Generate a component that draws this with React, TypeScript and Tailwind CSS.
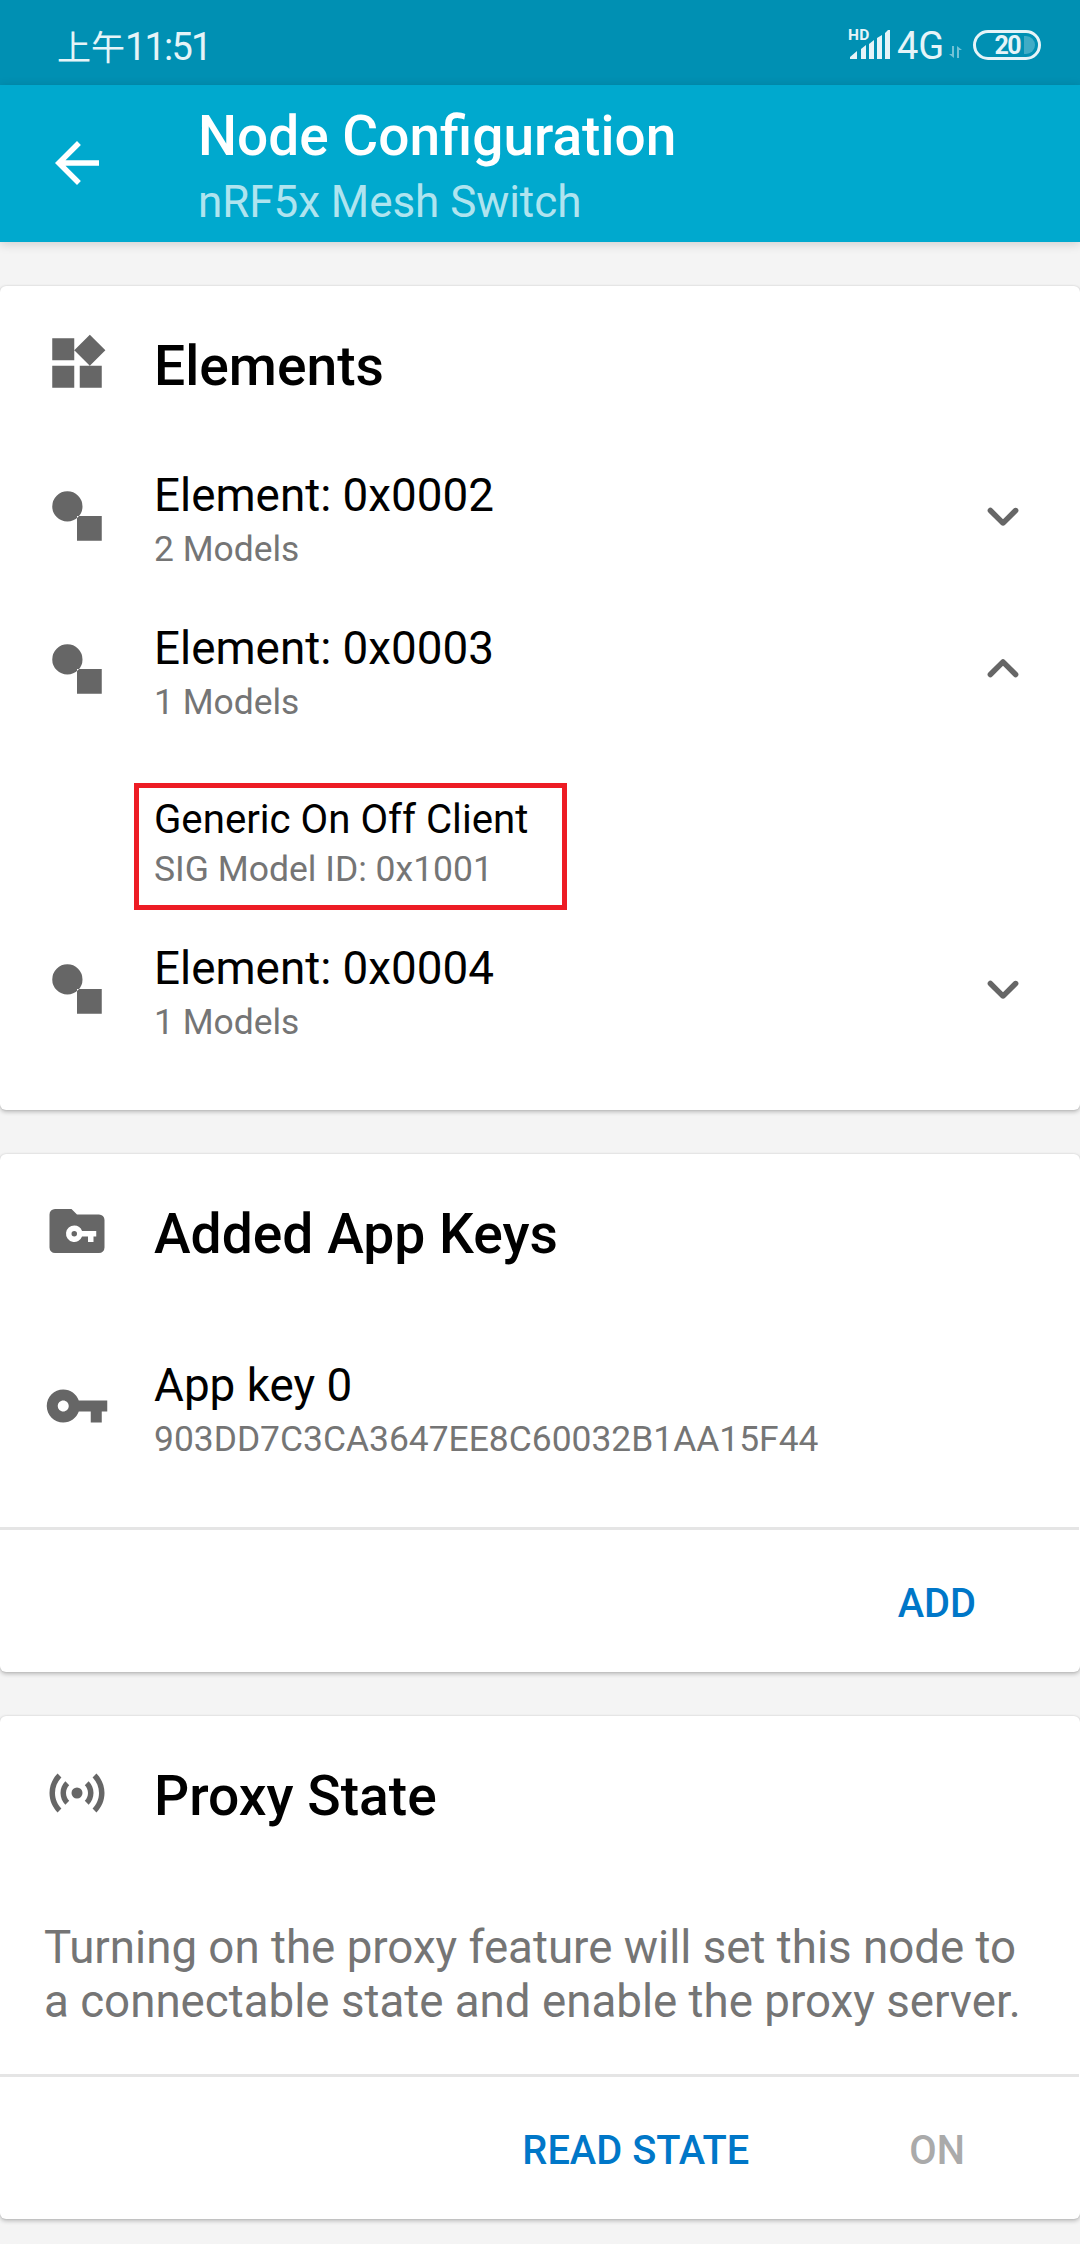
import type { ReactNode } from 'react';

const ICONS = {
  back: 'M20 11H7.83l5.59-5.59L12 4l-8 8 8 8 1.41-1.41L7.83 13H20v-2z',
  widgets:
    'M13 13v8h8v-8h-8zM3 21h8v-8H3v8zM3 3v8h8V3H3zm13.66-1.31L11 7.34 16.66 13l5.66-5.66-5.66-5.65z',
  element: 'M8.5 3a5.5 5.5 0 1 0 0 11a5.5 5.5 0 0 0 0-11zM12 12h9v9h-9z',
  down: 'M15.88 9.29L12 13.17 8.12 9.29a.996.996 0 1 0-1.41 1.41l4.59 4.59c.39.39 1.02.39 1.41 0l4.59-4.59a.996.996 0 0 0 0-1.41c-.39-.38-1.03-.39-1.42 0z',
  up: 'M11.29 8.71L6.7 13.3a.996.996 0 1 0 1.41 1.41L12 10.83l3.88 3.88a.996.996 0 1 0 1.41-1.41L12.7 8.71a.996.996 0 0 0-1.41 0z',
  folderKey:
    'M10 4l2 2h8a2 2 0 0 1 2 2v10a2 2 0 0 1-2 2H4a2 2 0 0 1-2-2V6a2 2 0 0 1 2-2h6zM11 10a3 3 0 1 0 2.83 4H16v2h2v-2h1v-2h-5.17A3 3 0 0 0 11 10zm0 2a1 1 0 1 1 0 2a1 1 0 0 1 0-2z',
  key: 'M12.65 10C11.83 7.67 9.61 6 7 6c-3.31 0-6 2.69-6 6s2.69 6 6 6c2.61 0 4.83-1.67 5.65-4H17v4h4v-4h2v-4H12.65zM7 14c-1.1 0-2-.9-2-2s.9-2 2-2 2 .9 2 2-.9 2-2 2z',
  proxy:
    'M4.93 4.93C3.12 6.74 2 9.24 2 12c0 2.76 1.12 5.26 2.93 7.07l1.41-1.41C4.89 16.22 4 14.22 4 12c0-2.21.89-4.22 2.34-5.66L4.93 4.93zM19.07 4.93l-1.41 1.41C19.11 7.78 20 9.79 20 12c0 2.22-.89 4.22-2.34 5.66l1.41 1.41C20.88 17.26 22 14.76 22 12c0-2.76-1.12-5.26-2.93-7.07zM7.76 7.76C6.67 8.85 6 10.35 6 12s.67 3.15 1.76 4.24l1.41-1.41C8.45 14.11 8 13.11 8 12s.45-2.11 1.17-2.83L7.76 7.76zM16.24 7.76l-1.41 1.41C15.55 9.89 16 10.89 16 12s-.45 2.11-1.17 2.83l1.41 1.41C17.33 15.15 18 13.65 18 12s-.67-3.15-1.76-4.24zM12 10a2 2 0 1 0 0 4a2 2 0 0 0 0-4z',
};

function Icon({ name }: { name: keyof typeof ICONS }) {
  return (
    <svg viewBox="0 0 24 24" className="size-[66px] shrink-0" fill="currentColor" fillRule="evenodd">
      <path d={ICONS[name]} />
    </svg>
  );
}

function StatusBar() {
  return (
    <div className="flex h-[85px] items-start justify-between bg-[#0090b3] pr-[39px] pl-[57px] text-[#e6f4f8]">
      <div className="mt-[26px] flex items-baseline leading-10 whitespace-pre">
        <span className="font-['Noto_Sans_CJK_SC',sans-serif] text-[34px] leading-10">上午</span>
        <span className="text-[38px] leading-10 tracking-[-1.8px]">11:51</span>
      </div>
      <div className="flex h-[85px] items-start">
        <div className="relative mt-[29px] h-[31px] w-[41px]">
          <span className="absolute top-[-3px] -left-px text-[15.5px] leading-[18px] font-bold tracking-[0.4px]">HD</span>
          <svg viewBox="0 0 41 31" className="h-[31px] w-[41px]" fill="currentColor">
            <path d="M1 28l7-6v8H1zM12 20l5-4v14h-5zM20 15l5-4v19h-5zM28 9l5-3v24h-5zM36 4l3-3h2v29h-5z" />
          </svg>
        </div>
        <span className="mt-[26px] ml-[7px] w-[49px] text-[38px] leading-10">4G</span>
        <svg viewBox="0 0 13 12" className="mt-[46px] ml-[3px] h-[12px] w-[13px] opacity-50" fill="currentColor">
          <path d="M3 0h2v12L0 8h3zM8 0l5 4h-3v8H8z" />
        </svg>
        <div className="mt-[30px] ml-[11px] flex h-[30px] w-[68px] items-center justify-end rounded-full border-[3px] border-[#e6f4f8] pr-[3px]">
          <span className="mr-[4px] font-['Roboto'] text-[25px] leading-none font-bold tracking-[-1.6px]">20</span>
          <span className="h-[18px] w-[11px] rounded-r-full bg-white/25" />
        </div>
      </div>
    </div>
  );
}

function AppBar() {
  return (
    <div className="relative flex h-[157px] items-start bg-[#00a9ce] pl-[44px] text-white shadow-[0_2px_10px_rgba(0,0,0,0.16)]">
      <div className="mt-[45px] w-[154px]">
        <Icon name="back" />
      </div>
      <div className="flex flex-col gap-2 pt-[19px]">
        <h1 className="text-[55px] leading-[64px] font-medium">Node Configuration</h1>
        <p className="text-[44px] leading-[52px] tracking-[-0.06px] text-white/70">nRF5x Mesh Switch</p>
      </div>
    </div>
  );
}

function Card({ children }: { children: ReactNode }) {
  return (
    <section className="rounded-[6px] bg-white shadow-[0_0_2px_rgba(0,0,0,0.12),0_2px_4px_rgba(0,0,0,0.24)]">
      {children}
    </section>
  );
}

function CardHeader({ icon, title }: { icon: keyof typeof ICONS; title: string }) {
  return (
    <header className="flex h-[164px] items-start gap-[44px] pt-[44px] pl-[44px] text-[#666]">
      <Icon name={icon} />
      <h2 className="mt-1 text-[55.2px] leading-[64px] font-medium text-black">{title}</h2>
    </header>
  );
}

function Row({ icon, title, detail, chevron }: { icon: keyof typeof ICONS; title: string; detail: string; chevron?: 'up' | 'down' }) {
  return (
    <div className="flex h-[153px] items-start gap-[44px] px-[44px] text-[#666]">
      <div className="pt-[33px]">
        <Icon name={icon} />
      </div>
      <div className="flex grow flex-col gap-[5px] pt-[19px]">
        <div className="text-[45.8px] leading-[54px] text-black">{title}</div>
        <div className="text-[35.4px] leading-[42px] text-[#757575]">{detail}</div>
      </div>
      {chevron && (
        <div className="pt-[33px]">
          <Icon name={chevron} />
        </div>
      )}
    </div>
  );
}

function Actions({ children }: { children: ReactNode }) {
  return (
    <div>
      <div className="mr-px h-[3px] bg-[#e5e5e5]" />
      <div className="flex h-[142px] items-center justify-end pt-[6px] text-[39.8px] leading-[46px] font-medium text-[#0077c8]">
        {children}
      </div>
    </div>
  );
}

export default function App() {
  return (
    <div className="h-[2244px] w-[1080px] overflow-hidden bg-[#f4f4f4] font-['Roboto','Noto_Sans_CJK_SC',sans-serif]">
      <StatusBar />
      <AppBar />
      <main className="flex flex-col gap-[44px] pt-[44px]">
        <Card>
          <CardHeader icon="widgets" title="Elements" />
          <Row icon="element" title="Element: 0x0002" detail="2 Models" chevron="down" />
          <Row icon="element" title="Element: 0x0003" detail="1 Models" chevron="up" />
          <div className="relative flex h-[167px] flex-col gap-1 pt-10 pl-[154px]">
            <div className="text-[40.2px] leading-[48px] text-black">Generic On Off Client</div>
            <div className="text-[35.5px] leading-[42px] text-[#757575]">SIG Model ID: 0x1001</div>
            <div className="absolute top-[27px] left-[134px] h-[127px] w-[433px] border-[5px] border-[#ed1c24]" />
          </div>
          <Row icon="element" title="Element: 0x0004" detail="1 Models" chevron="down" />
          <div className="h-[34px]" />
        </Card>
        <Card>
          <CardHeader icon="folderKey" title="Added App Keys" />
          <div className="pt-[22px] pb-[34px]">
            <Row icon="key" title="App key 0" detail="903DD7C3CA3647EE8C60032B1AA15F44" />
          </div>
          <Actions>
            <button className="mr-[104px]">ADD</button>
          </Actions>
        </Card>
        <Card>
          <CardHeader icon="proxy" title="Proxy State" />
          <p className="h-[194px] pt-[41px] pl-[44px] text-[45.7px] leading-[54px] text-[#757575]">
            Turning on the proxy feature will set this node to
            <br />a connectable state and enable the proxy server.
          </p>
          <Actions>
            <button className="mr-[160px]">READ STATE</button>
            <button className="mr-[115px] text-[#aaa]">ON</button>
          </Actions>
        </Card>
      </main>
    </div>
  );
}
